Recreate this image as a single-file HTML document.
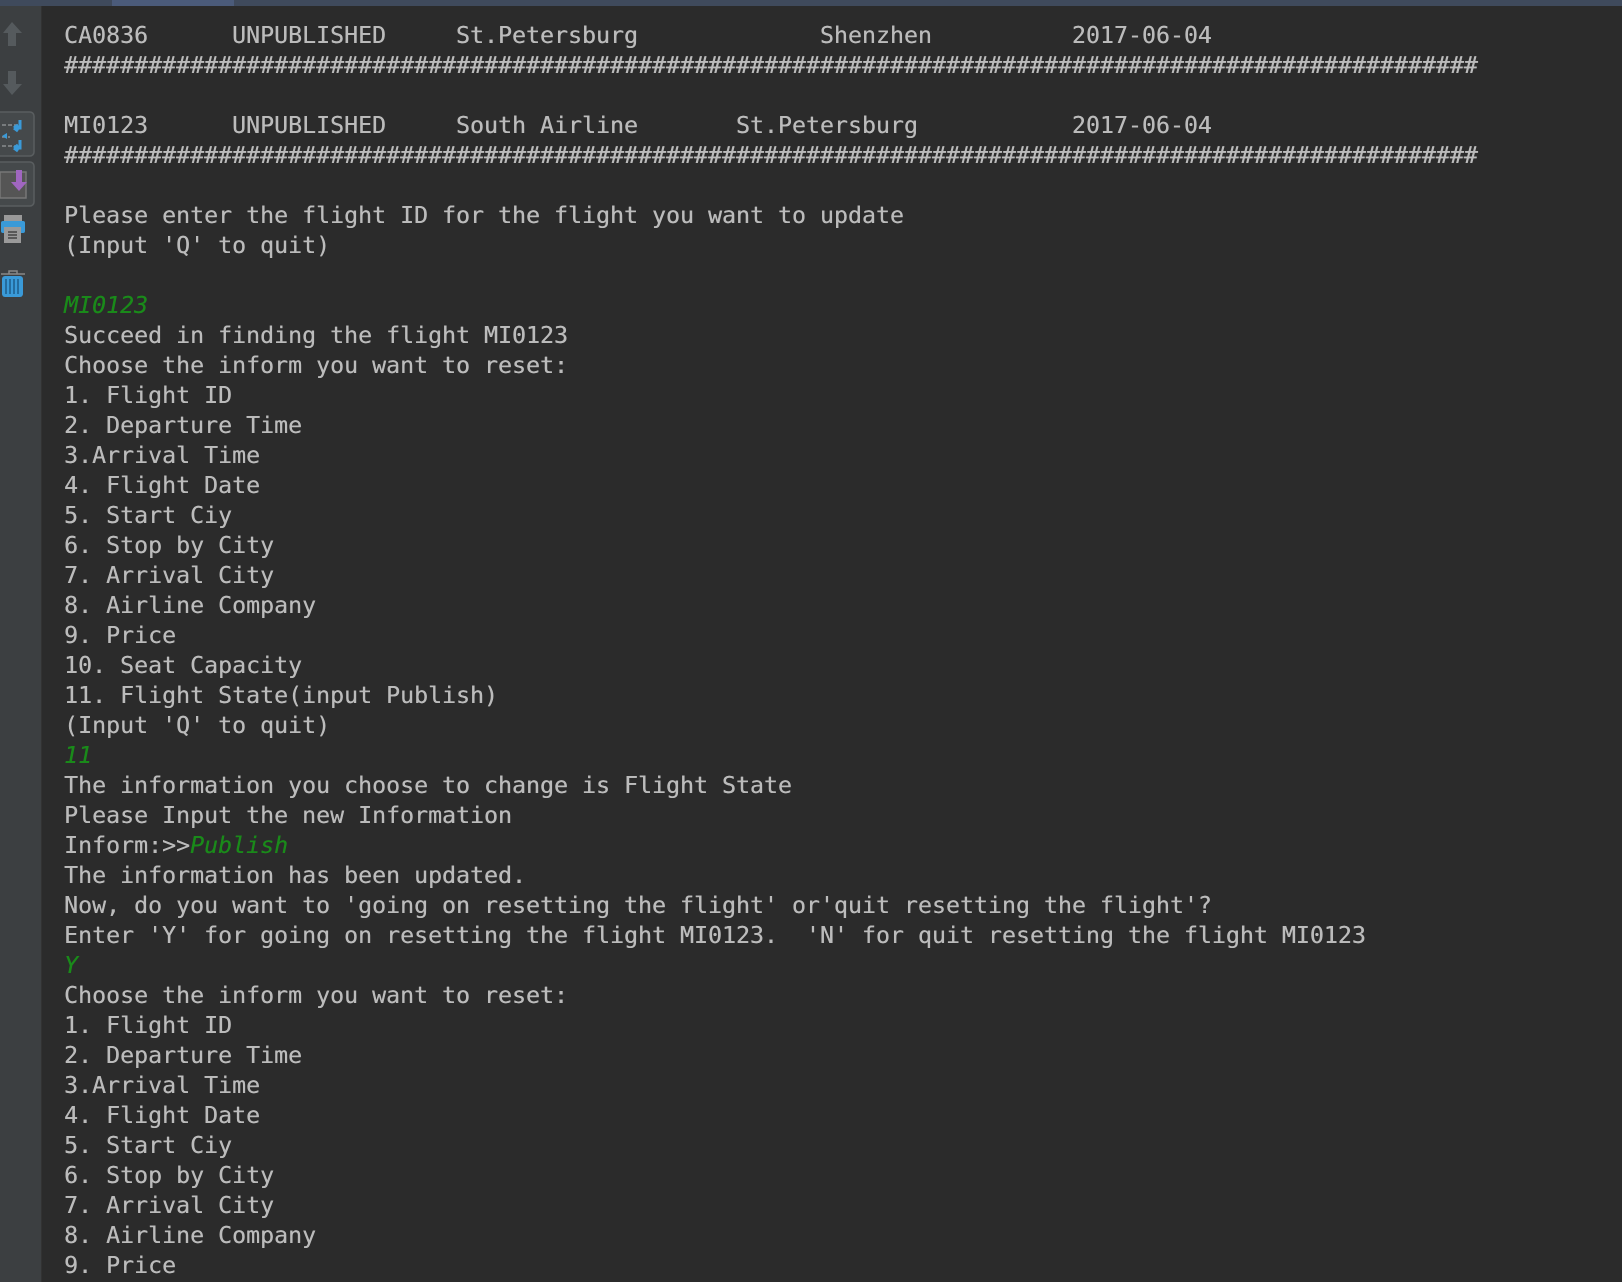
<!DOCTYPE html>
<html><head><meta charset="utf-8">
<style>
html,body{margin:0;padding:0;}
body{width:1622px;height:1282px;background:#2b2b2b;position:relative;overflow:hidden;}
#top{position:absolute;left:0;top:0;width:1622px;height:6px;background:#3f4a5c;}
#tab{position:absolute;left:112px;top:0;width:122px;height:6px;background:#4b5b7a;}
#side{position:absolute;left:0;top:6px;width:41px;height:1276px;background:#3c3f41;border-right:1px solid #323232;}
pre{position:absolute;left:64px;top:21px;margin:0;font-family:"DejaVu Sans Mono","Liberation Mono",monospace;font-size:23.25px;line-height:30px;color:#bbbbbb;white-space:pre;text-shadow:0.3px 0 0 #bbbbbb;}
.g{color:#1a8a1a;font-style:italic;text-shadow:0.3px 0 0 #1a8a1a;}
svg{position:absolute;}
</style></head><body>
<div id="top"></div><div id="tab"></div>
<div id="side"></div>
<svg width="42" height="300" style="left:0;top:8px" viewBox="0 8 42 300">
 <path d="M12 22 L3 33 H8 V46 H16 V33 H22 Z" fill="#555a5d"/>
 <path d="M8 71 V84 H3 L12 95 L22 84 H16 V71 Z" fill="#555a5d"/>
 <rect x="-4" y="112" width="38" height="44" rx="4" fill="#45494b" stroke="#5a5e60" stroke-width="1.5"/>
 <path d="M2 125 H18 M2 137 H10 M2 146 H18" stroke="#8a8e90" stroke-width="1.5" stroke-dasharray="4 2"/>
 <path d="M20 120 V128 H14 M14 128 l4 -3 M14 128 l4 3" stroke="#3a9ad8" stroke-width="3" fill="none"/>
 <path d="M2 136 l5 -3 v6 z" fill="#3a9ad8"/>
 <path d="M20 140 V148 H14 M14 148 l4 -3 M14 148 l4 3" stroke="#3a9ad8" stroke-width="3" fill="none"/>
 <rect x="-4" y="162" width="38" height="44" rx="4" fill="#45494b" stroke="#5a5e60" stroke-width="1.5"/>
 <rect x="0" y="172" width="26" height="26" fill="#555" stroke="#777" stroke-width="1.5"/>
 <path d="M16 170 H22 V182 H27 L19 191 L11 182 H16 Z" fill="#a066c0"/>
 <rect x="1" y="221" width="24" height="12" rx="2" fill="#3a9ad8"/>
 <rect x="4" y="215" width="18" height="6" fill="#999"/>
 <rect x="4" y="227" width="17" height="16" fill="#9a9a9a"/>
 <path d="M8 232 H17 M8 235 H17 M8 238 H17" stroke="#333" stroke-width="1.2"/>
 <path d="M1 274 H25 M9 274 V271 H17 V274" stroke="#888" stroke-width="1.5" fill="none"/>
 <rect x="2" y="276" width="21" height="21" rx="3" fill="#3a9ad8"/>
 <path d="M6 279 V294 M10 279 V294 M14 279 V294 M18 279 V294" stroke="#1d5d8a" stroke-width="1.5"/>
</svg>
<pre>CA0836      UNPUBLISHED     St.Petersburg             Shenzhen          2017-06-04
#####################################################################################################

MI0123      UNPUBLISHED     South Airline       St.Petersburg           2017-06-04
#####################################################################################################

Please enter the flight ID for the flight you want to update
(Input 'Q' to quit)

<span class="g">MI0123</span>
Succeed in finding the flight MI0123
Choose the inform you want to reset:
1. Flight ID
2. Departure Time
3.Arrival Time
4. Flight Date
5. Start Ciy
6. Stop by City
7. Arrival City
8. Airline Company
9. Price
10. Seat Capacity
11. Flight State(input Publish)
(Input 'Q' to quit)
<span class="g">11</span>
The information you choose to change is Flight State
Please Input the new Information
Inform:&gt;&gt;<span class="g">Publish</span>
The information has been updated.
Now, do you want to 'going on resetting the flight' or'quit resetting the flight'?
Enter 'Y' for going on resetting the flight MI0123.  'N' for quit resetting the flight MI0123
<span class="g">Y</span>
Choose the inform you want to reset:
1. Flight ID
2. Departure Time
3.Arrival Time
4. Flight Date
5. Start Ciy
6. Stop by City
7. Arrival City
8. Airline Company
9. Price</pre>
</body></html>
